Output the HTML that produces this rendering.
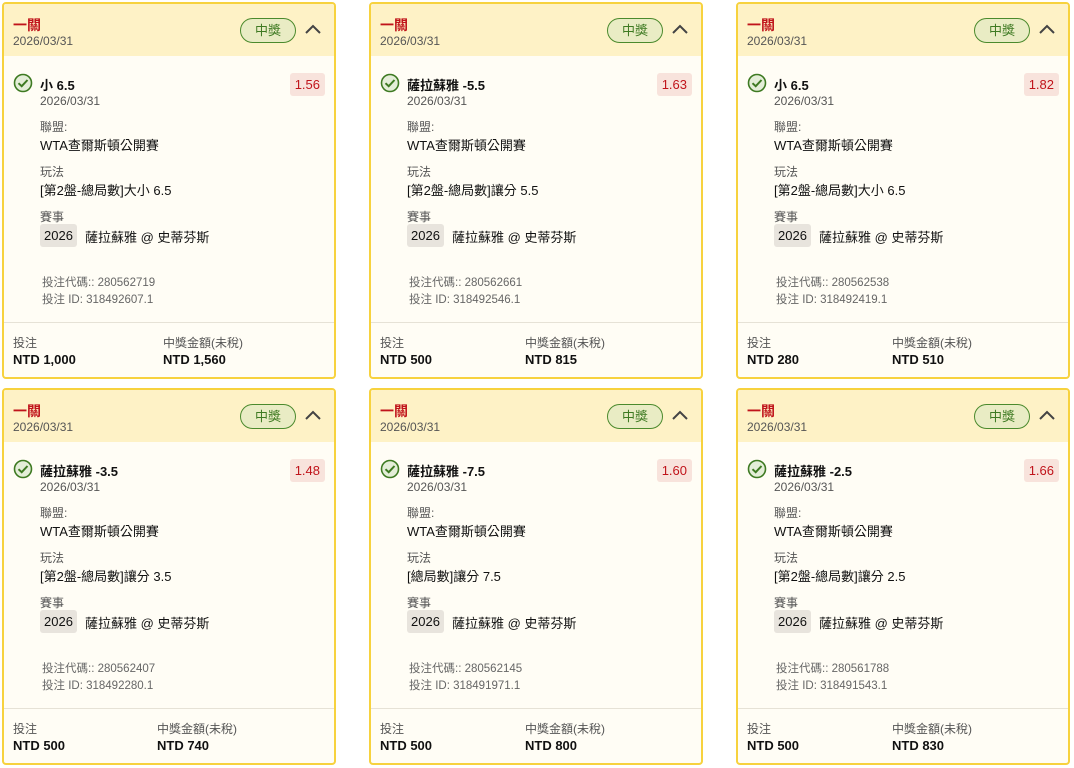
<!DOCTYPE html>
<html><head><meta charset="utf-8"><style>
*{box-sizing:border-box;margin:0;padding:0}
body{width:1074px;height:768px;background:#fff;font-family:"Liberation Sans","Noto Sans CJK TC",sans-serif;position:relative;overflow:hidden}
.card{position:absolute;width:334px;height:377px;border:2px solid #f7d23e;border-radius:4px;background:#fffdf5;overflow:hidden}
.hd{position:absolute;left:0;top:0;right:0;height:52px;background:#fef2c6}
.a{position:absolute;white-space:nowrap}
.t1{left:9px;top:11px;color:#c0141b;font-weight:bold;font-size:14px}
.d1{left:9px;top:30px;color:#555;font-size:12px}
.pill{left:236px;top:14px;width:56px;height:25px;border:1px solid #4b8a2d;border-radius:13px;background:#e9ecc4;color:#3e7a22;font-size:13px;text-align:center;line-height:23px}
.chev{left:300px;top:19px}
.chk{left:9px;top:69px}
.ttl{left:36px;top:71px;font-weight:bold;font-size:13px;color:#111}
.odds{right:9px;top:69px;background:#f8e3dc;color:#c0141b;font-size:13px;border-radius:3px;padding:4px 5px}
.sm{font-size:12px;color:#555}
.val{font-size:13px;color:#111}
.chip{left:36px;top:220px;background:#e8e4dd;border-radius:3px;padding:4px 4px;font-size:13px;color:#111}
.id{font-size:11.5px;color:#666}
.div{position:absolute;left:0;right:0;top:318px;border-top:1px solid #e6e2d6}
.lb{font-size:12px;color:#555}
.amt{font-size:13px;font-weight:bold;color:#111}
</style></head><body>
<script>
const cards=[
[2,2,"小 6.5","1.56","[第2盤-總局數]大小 6.5","280562719","318492607.1","NTD 1,000","NTD 1,560",159],
[369,2,"薩拉蘇雅 -5.5","1.63","[第2盤-總局數]讓分 5.5","280562661","318492546.1","NTD 500","NTD 815",154],
[736,2,"小 6.5","1.82","[第2盤-總局數]大小 6.5","280562538","318492419.1","NTD 280","NTD 510",154],
[2,388,"薩拉蘇雅 -3.5","1.48","[第2盤-總局數]讓分 3.5","280562407","318492280.1","NTD 500","NTD 740",153],
[369,388,"薩拉蘇雅 -7.5","1.60","[總局數]讓分 7.5","280562145","318491971.1","NTD 500","NTD 800",154],
[736,388,"薩拉蘇雅 -2.5","1.66","[第2盤-總局數]讓分 2.5","280561788","318491543.1","NTD 500","NTD 830",154]];
let h="";
for(const c of cards){
h+=`<div class="card" style="left:${c[0]}px;top:${c[1]}px">
<div class="hd"></div>
<div class="a t1">一關</div><div class="a d1">2026/03/31</div>
<div class="a pill">中獎</div>
<svg class="a chev" width="18" height="12" viewBox="0 0 18 12"><path d="M2 10 L9 3 L16 10" fill="none" stroke="#444" stroke-width="2"/></svg>
<svg class="a chk" width="20" height="20" viewBox="0 0 20 20"><circle cx="10" cy="10" r="8.5" fill="#e4eed8" stroke="#3e7a22" stroke-width="1.6"/><path d="M5.5 10.2 L8.7 13.2 L14.5 7" fill="none" stroke="#3e7a22" stroke-width="2"/></svg>
<div class="a ttl">${c[2]}</div><div class="a odds">${c[3]}</div>
<div class="a sm" style="left:36px;top:90px">2026/03/31</div>
<div class="a sm" style="left:36px;top:114px">聯盟:</div>
<div class="a val" style="left:36px;top:131px">WTA查爾斯頓公開賽</div>
<div class="a sm" style="left:36px;top:159px">玩法</div>
<div class="a val" style="left:36px;top:176px">${c[4]}</div>
<div class="a sm" style="left:36px;top:204px">賽事</div>
<div class="a chip">2026</div>
<div class="a val" style="left:81px;top:223px">薩拉蘇雅 @ 史蒂芬斯</div>
<div class="a id" style="left:38px;top:270px">投注代碼:: ${c[5]}</div>
<div class="a id" style="left:38px;top:287px">投注 ID: ${c[6]}</div>
<div class="div"></div>
<div class="a lb" style="left:9px;top:330px">投注</div>
<div class="a amt" style="left:9px;top:348px">${c[7]}</div>
<div class="a lb" style="left:${c[9]}px;top:330px">中獎金額(未稅)</div>
<div class="a amt" style="left:${c[9]}px;top:348px">${c[8]}</div>
</div>`;}
document.write(h);
</script>
</body></html>
